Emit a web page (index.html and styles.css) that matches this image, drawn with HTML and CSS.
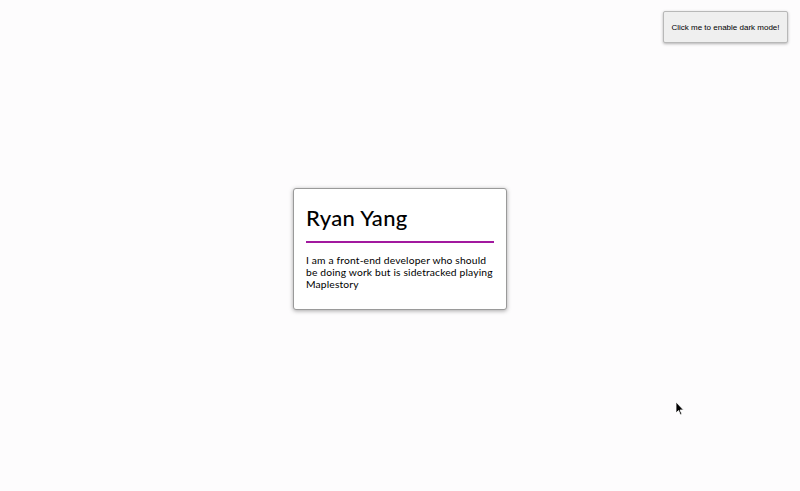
FILE: index.html
```html
<!DOCTYPE html>
<html>
<head>
<meta charset="utf-8">
<link rel="stylesheet" href="styles.css">
</head>
<body>
<button class="mode-btn">Click me to enable dark mode!</button>
<main class="page">
  <div class="card">
    <h1 class="name">Ryan Yang</h1>
    <hr class="divider">
    <p class="bio">I am a front-end developer who should be doing work but is sidetracked playing Maplestory</p>
  </div>
</main>
<svg class="cursor" width="10" height="15" viewBox="0 0 10 15"><path d="M1 1 L1 12 L3.5 9.5 L5.5 14 L7 13.3 L5 9 L8.5 9 Z" fill="#000" stroke="#fff" stroke-width="0.8"/></svg>
</body>
</html>
```
FILE: styles.css
```css
html, body { margin: 0; padding: 0; }
body {
  background: #fdfcfd;
  font-family: "Lato", "Noto Sans", sans-serif;
  width: 800px;
  height: 491px;
  position: relative;
  overflow: hidden;
}
.page {
  height: 100%;
  display: flex;
  align-items: center;
  justify-content: center;
  padding-top: 6px;
  box-sizing: border-box;
}
.card {
  width: 188px;
  padding: 14px 12px 19px 12px;
  background: #fff;
  border: 1px solid #9a9a9a;
  border-radius: 3px;
  box-shadow: 0 1px 4px rgba(0,0,0,0.35);
}
.name {
  margin: 0;
  font-size: 22px;
  font-weight: 500;
  line-height: 30px;
  color: #000;
  letter-spacing: 0.3px;
}
.divider {
  border: none;
  height: 2px;
  background: #a2199f;
  margin: 8px 0 11px 0;
}
.bio {
  margin: 0;
  font-size: 10.3px;
  line-height: 12px;
  color: #000;
  letter-spacing: 0.15px;
}
.mode-btn {
  position: absolute;
  top: 11px;
  right: 12px;
  width: 125px;
  height: 32px;
  background: #efefef;
  border: 1px solid #b8b8b8;
  border-radius: 2px;
  box-shadow: 0 1px 3px rgba(0,0,0,0.3);
  font-family: "Liberation Sans", Arial, sans-serif;
  font-size: 8px;
  color: #000;
  padding: 0;
}
.cursor {
  position: absolute;
  left: 675px;
  top: 401px;
}
```
